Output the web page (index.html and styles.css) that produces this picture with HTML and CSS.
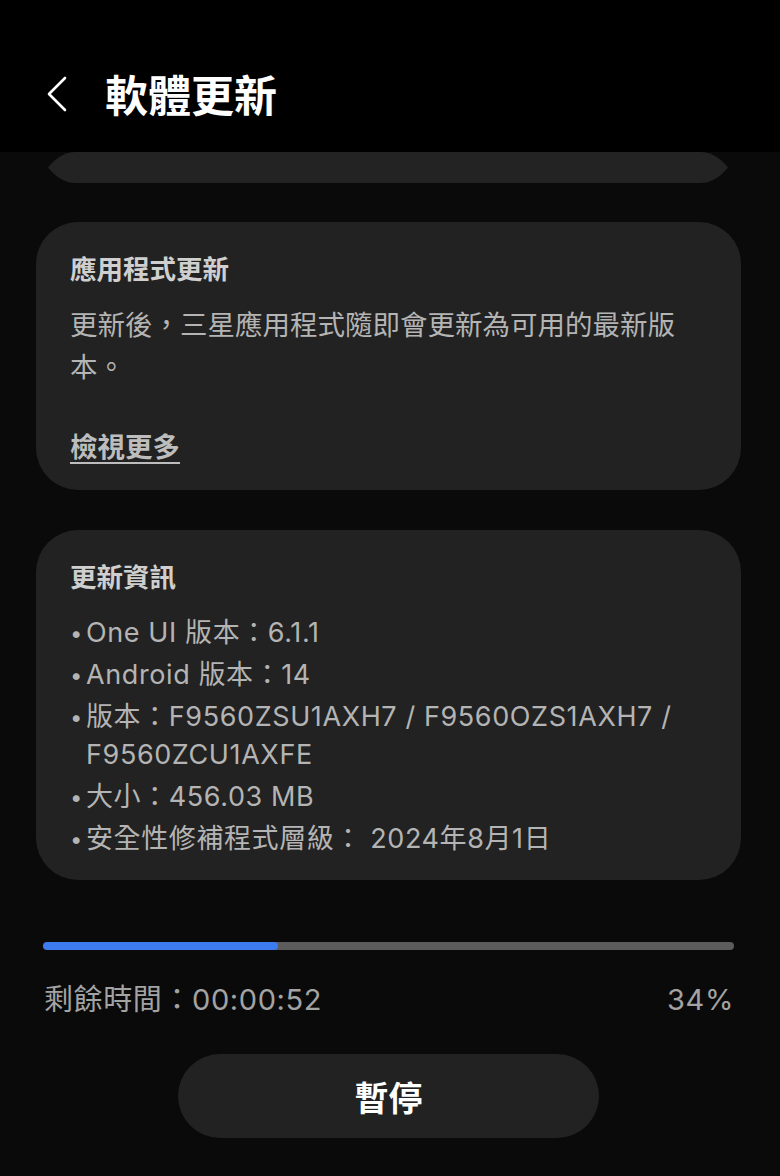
FILE: index.html
```html
<!DOCTYPE html>
<html lang="zh-Hant">
<head>
<meta charset="utf-8">
<title>軟體更新</title>
<link rel="stylesheet" href="styles.css">
</head>
<body>
<header class="appbar">
  <svg class="back" width="24" height="36" viewBox="0 0 24 36">
    <path d="M19 2 L3 18 L19 34" fill="none" stroke="#fff" stroke-width="2.6" stroke-linecap="round" stroke-linejoin="round"/>
  </svg>
  <h1 class="title">軟體更新</h1>
</header>
<main class="content">
  <svg class="peek" width="680" height="31" viewBox="0 0 680 31">
    <path d="M28 0 L652 0 C665 0 674 8 680 15.5 C674 23 665 31 652 31 L28 31 C15 31 6 23 0 15.5 C6 8 15 0 28 0 Z" fill="#232323"/>
  </svg>
  <section class="card card-apps">
    <h2 class="card-title">應用程式更新</h2>
    <p class="card-text">更新後，三星應用程式隨即會更新為可用的最新版本。</p>
    <a class="more">檢視更多</a>
  </section>
  <section class="card card-info">
    <h2 class="card-title">更新資訊</h2>
    <ul class="info">
      <li>One UI 版本：6.1.1</li>
      <li>Android 版本：14</li>
      <li>版本：F9560ZSU1AXH7 / F9560OZS1AXH7 / F9560ZCU1AXFE</li>
      <li>大小：456.03 MB</li>
      <li>安全性修補程式層級： 2024年8月1日</li>
    </ul>
  </section>
  <div class="progress">
    <div class="progress-fill" style="width: 34%"></div>
  </div>
  <div class="status">
    <span class="remaining">剩餘時間：00:00:52</span>
    <span class="percent">34%</span>
  </div>
  <div class="actions">
    <button class="pause">暫停</button>
  </div>
</main>
</body>
</html>
```
FILE: styles.css
```css
* { box-sizing: border-box; }
html, body {
  margin: 0;
  padding: 0;
  background: #0a0a0a;
  width: 780px;
  height: 1176px;
  overflow: hidden;
  font-family: "Inter", "Noto Sans CJK TC", sans-serif;
}
.appbar {
  height: 152px;
  background: #000;
  display: flex;
  align-items: center;
  padding-left: 46px;
  padding-top: 34px;
}
.back { display: block; margin-top: 2px; }
.title {
  margin: 0 0 0 35px;
  color: #fff;
  font-family: "Noto Sans CJK TC", sans-serif;
  font-size: 43px;
  font-weight: 700;
  line-height: 1;
}
.content {
  padding: 0 39px 0 36px;
  display: flex;
  flex-direction: column;
}
.peek { display: block; margin-left: 12px; }
.card {
  background: #222;
  border-radius: 42px;
  padding: 30px 30px 26px 34px;
}
.card-apps { margin-top: 39px; height: 268px; }
.card-info { margin-top: 40px; height: 350px; }
.card-title {
  margin: 0;
  color: #cfcfcf;
  font-family: "Noto Sans CJK TC", sans-serif;
  font-size: 26.5px;
  font-weight: 700;
  line-height: 32px;
}
.card-text {
  margin: 20px 0 0 0;
  color: #b4b4b4;
  font-size: 27.5px;
  line-height: 42px;
}
.more {
  display: inline-block;
  margin-top: 41px;
  color: #bdbdbd;
  font-family: "Noto Sans CJK TC", sans-serif;
  font-size: 27.5px;
  font-weight: 700;
  text-decoration: underline;
  text-underline-offset: 5px;
  line-height: 32px;
}
.info {
  list-style: none;
  margin: 22px 0 0 0;
  padding: 0;
  color: #b4b4b4;
  font-size: 27px;
  line-height: 38px;
  letter-spacing: 0.6px;
}
.info li {
  position: relative;
  padding-left: 16px;
  margin-bottom: 4px;
}
.info li::before {
  content: "•";
  position: absolute;
  left: 0;
  top: 0;
  font-size: 22px;
  color: #b4b4b4;
}
.progress {
  margin: 62px 7px 0 7px;
  height: 8px;
  border-radius: 4px;
  background: #5c5c5c;
  overflow: hidden;
}
.progress-fill {
  height: 100%;
  background: #3d7bf0;
  border-radius: 4px;
}
.status {
  margin: 30px 7px 0 8px;
  display: flex;
  justify-content: space-between;
  color: #a3a3a3;
  font-size: 29px;
  line-height: 40px;
  letter-spacing: 0.6px;
}
.actions {
  display: flex;
  justify-content: center;
  margin-top: 34px;
}
.pause {
  width: 421px;
  height: 84px;
  border: none;
  border-radius: 42px;
  background: #222;
  color: #fff;
  font-family: "Noto Sans CJK TC", sans-serif;
  font-size: 34px;
  font-weight: 700;
}
```
